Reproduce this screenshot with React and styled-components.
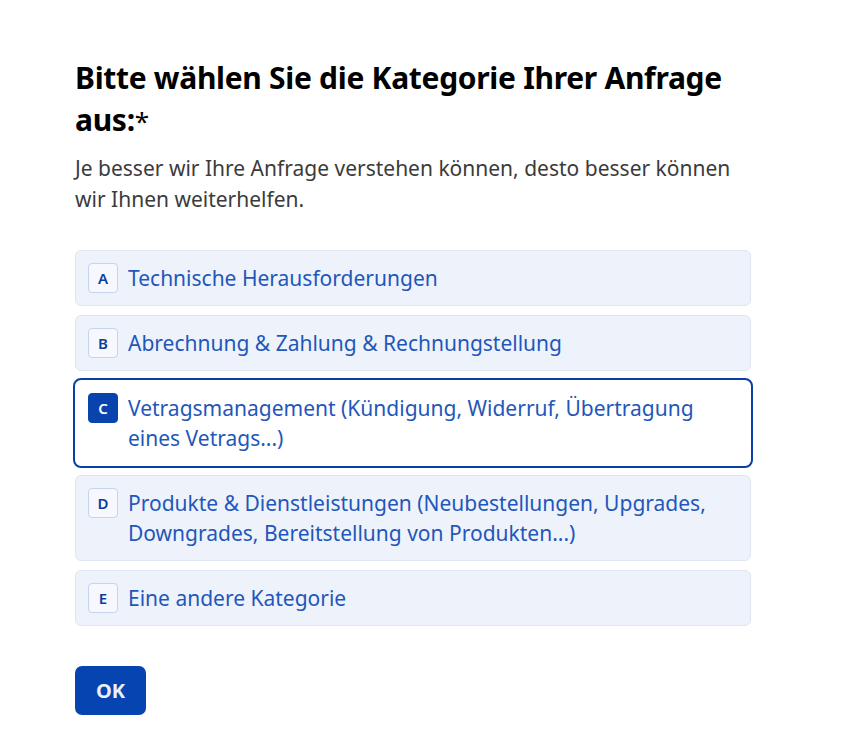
import React, { useState } from 'react';
import styled, { createGlobalStyle } from 'styled-components';

const GlobalStyle = createGlobalStyle`
  html, body {
    margin: 0;
    padding: 0;
    background: #ffffff;
  }
  body {
    font-family: "Noto Sans", "Open Sans", sans-serif;
  }
`;

const Page = styled.div`
  padding: 57px 0 40px 75px;
`;

const Form = styled.div`
  width: 676px;
`;

const Title = styled.h1`
  margin: 0;
  font-size: 30px;
  line-height: 42px;
  font-weight: 700;
  color: #000000;
  letter-spacing: -0.3px;
`;

const Required = styled.span`
  font-weight: 400;
  font-size: 26px;
`;

const Subtitle = styled.p`
  margin: 11px 0 0;
  font-size: 21px;
  line-height: 31px;
  color: #3b3b3b;
`;

const Options = styled.div`
  display: flex;
  flex-direction: column;
  gap: 9px;
  margin-top: 35px;
`;

const Option = styled.button`
  display: flex;
  align-items: flex-start;
  gap: 10px;
  width: 100%;
  padding: 12px 12px;
  border: 1px solid ${p => (p.$selected ? '#ffffff' : '#dfe5f1')};
  outline: ${p => (p.$selected ? '2px solid #0b3fa5' : 'none')};
  border-radius: 6px;
  background: ${p => (p.$selected ? '#ffffff' : '#eef2fa')};
  text-align: left;
  font-family: inherit;
  cursor: pointer;
`;

const Key = styled.span`
  flex: none;
  display: flex;
  align-items: center;
  justify-content: center;
  box-sizing: border-box;
  width: 30px;
  height: 30px;
  border-radius: 4px;
  border: 1px solid ${p => (p.$selected ? '#0843ae' : '#c5d4ef')};
  background: ${p => (p.$selected ? '#0843ae' : '#f6f8fd')};
  color: ${p => (p.$selected ? '#ffffff' : '#0d3c9c')};
  font-size: 15px;
  font-weight: 600;
`;

const Label = styled.span`
  font-size: 21px;
  line-height: 30px;
  color: #1f57ba;
`;

const Submit = styled.button`
  margin-top: 40px;
  width: 71px;
  height: 49px;
  border: none;
  border-radius: 7px;
  background: #0645b1;
  color: #eaf1fc;
  font-family: inherit;
  font-size: 20px;
  font-weight: 700;
  cursor: pointer;
`;

const choices = [
  { key: 'A', text: 'Technische Herausforderungen' },
  { key: 'B', text: 'Abrechnung & Zahlung & Rechnungstellung' },
  { key: 'C', text: 'Vetragsmanagement (Kündigung, Widerruf, Übertragung eines Vetrags...)' },
  { key: 'D', text: 'Produkte & Dienstleistungen (Neubestellungen, Upgrades, Downgrades, Bereitstellung von Produkten...)' },
  { key: 'E', text: 'Eine andere Kategorie' },
];

export default function App() {
  const [selected, setSelected] = useState('C');

  return (
    <Page>
      <GlobalStyle />
      <Form>
        <Title>
          Bitte wählen Sie die Kategorie Ihrer Anfrage aus:<Required>*</Required>
        </Title>
        <Subtitle>
          Je besser wir Ihre Anfrage verstehen können, desto besser können wir Ihnen weiterhelfen.
        </Subtitle>
        <Options>
          {choices.map(c => (
            <Option key={c.key} $selected={selected === c.key} onClick={() => setSelected(c.key)}>
              <Key $selected={selected === c.key}>{c.key}</Key>
              <Label>{c.text}</Label>
            </Option>
          ))}
        </Options>
        <Submit>OK</Submit>
      </Form>
    </Page>
  );
}
